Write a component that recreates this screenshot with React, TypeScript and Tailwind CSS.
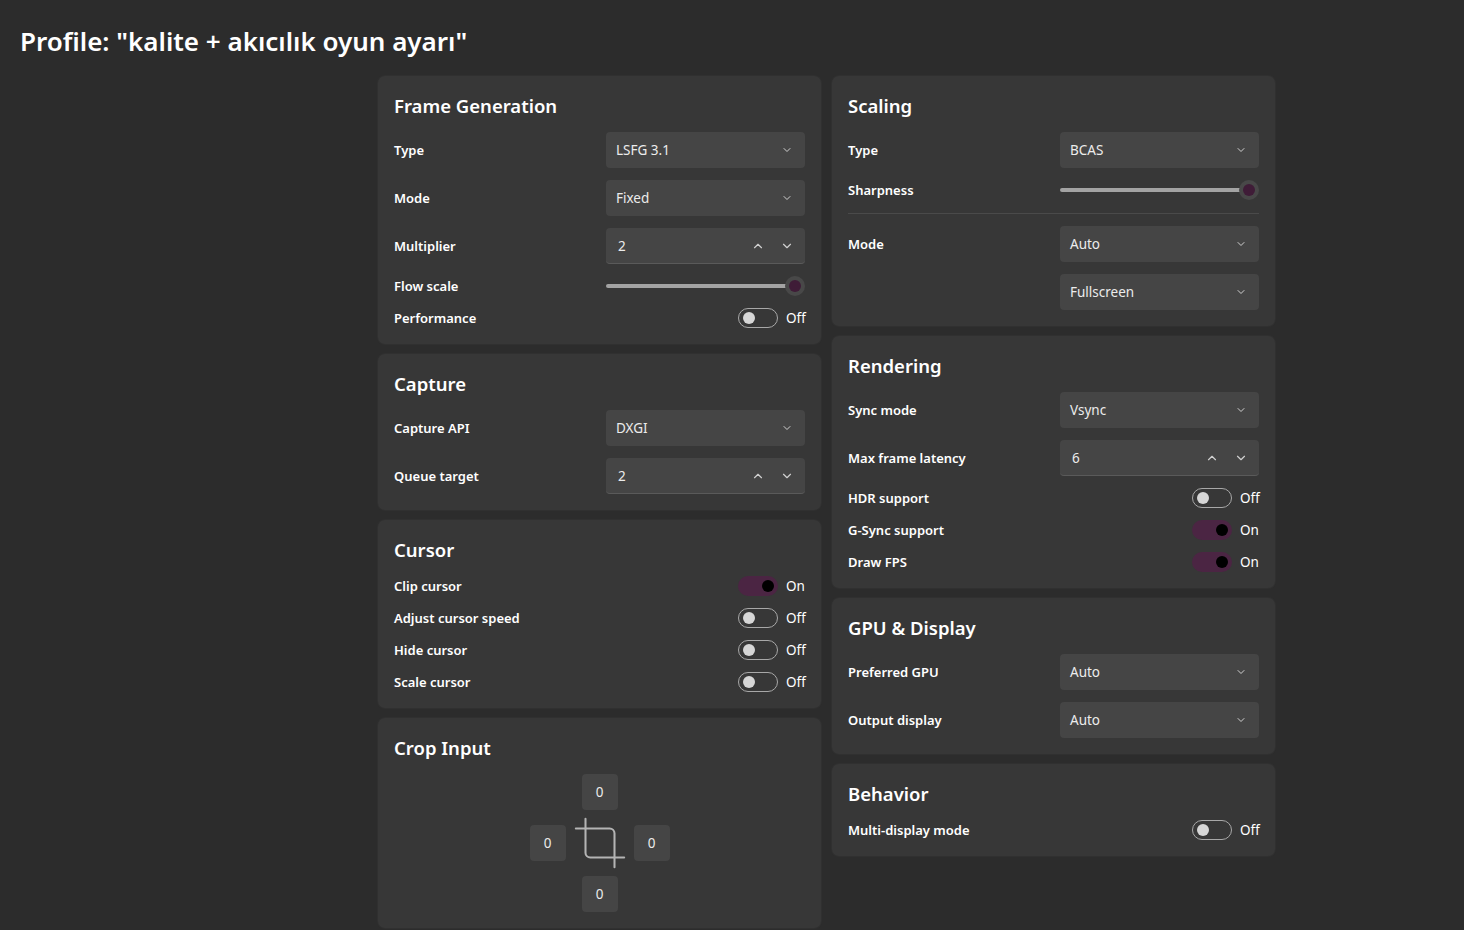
import { ChevronDown, ChevronUp, Crop } from "lucide-react";
import type { ReactNode } from "react";

const font = { fontFamily: '"Noto Sans", "Open Sans", sans-serif' };

// ── Building blocks ─────────────────────────────────────────────────────────
function Card({ title, children }: { title: string; children: ReactNode }) {
  return (
    <section className="flex flex-col gap-3 rounded-[7px] bg-[#373737] p-4 shadow-[0_0_0_1px_#303030]">
      <h2 className="text-[18.5px] leading-[28px] font-semibold text-white">{title}</h2>
      {children}
    </section>
  );
}

function Row({ label, children }: { label?: string; children: ReactNode }) {
  return (
    <div className="flex items-center justify-between leading-5">
      <span className="text-[13px] font-semibold text-white">{label}</span>
      {children}
    </div>
  );
}

function Select({ value }: { value: string }) {
  return (
    <div className="flex h-9 w-[199px] items-center justify-between rounded-[4px] bg-[#454545] pl-[10px] pr-[12px]">
      <span className="text-[13.5px] text-[#ececec]">{value}</span>
      <ChevronDown size={12} strokeWidth={2} className="text-[#d0d0d0]" />
    </div>
  );
}

function NumberBox({ value }: { value: string }) {
  return (
    <div className="flex h-9 w-[199px] items-center justify-between rounded-[4px] border-b border-[#5a5a5a] bg-[#454545] pl-[12px] pr-[11px]">
      <span className="text-[13.5px] text-[#ececec]">{value}</span>
      <div className="flex items-center gap-[15px] text-[#d0d0d0]">
        <ChevronUp size={14} strokeWidth={2} />
        <ChevronDown size={14} strokeWidth={2} />
      </div>
    </div>
  );
}

function Slider() {
  return (
    <div className="flex h-5 w-[199px] items-center">
      <div className="h-1 flex-1 rounded-full bg-[#a3a3a3]" />
      <div className="-ml-1 flex h-5 w-5 items-center justify-center rounded-full bg-[#484848]">
        <div className="h-3 w-3 rounded-full bg-[#3f1c37]" />
      </div>
    </div>
  );
}

function Toggle({ on }: { on: boolean }) {
  return (
    <div className="flex items-center gap-2">
      {on ? (
        <div className="flex h-5 w-10 items-center justify-end rounded-full bg-[#4b2543] pr-[4px]">
          <div className="h-3 w-3 rounded-full bg-black" />
        </div>
      ) : (
        <div className="flex h-5 w-10 items-center rounded-full border border-[#a8a8a8] pl-[4px]">
          <div className="h-3 w-3 rounded-full bg-[#d6d6d6]" />
        </div>
      )}
      <span className="w-[19px] text-[13.5px] text-white">{on ? "On" : "Off"}</span>
    </div>
  );
}

function CropBox() {
  return (
    <div className="flex h-9 w-9 items-center justify-center rounded-[4px] bg-[#454545] text-[13.5px] text-[#ececec]">
      0
    </div>
  );
}

// ── Page ────────────────────────────────────────────────────────────────────
export default function App() {
  return (
    <div className="min-h-screen bg-[#2c2c2c] px-5" style={font}>
      <h1 className="pt-[23px] text-[26px] leading-[36px] font-semibold text-white">
        Profile: "kalite + akıcılık oyun ayarı"
      </h1>

      <div className="mt-[17px] flex gap-[11px] pl-[358px]">
        {/* Left column */}
        <div className="flex w-[443px] flex-col gap-2.5">
          <Card title="Frame Generation">
            <Row label="Type"><Select value="LSFG 3.1" /></Row>
            <Row label="Mode"><Select value="Fixed" /></Row>
            <Row label="Multiplier"><NumberBox value="2" /></Row>
            <Row label="Flow scale"><Slider /></Row>
            <Row label="Performance"><Toggle on={false} /></Row>
          </Card>

          <Card title="Capture">
            <Row label="Capture API"><Select value="DXGI" /></Row>
            <Row label="Queue target"><NumberBox value="2" /></Row>
          </Card>

          <Card title="Cursor">
            <Row label="Clip cursor"><Toggle on /></Row>
            <Row label="Adjust cursor speed"><Toggle on={false} /></Row>
            <Row label="Hide cursor"><Toggle on={false} /></Row>
            <Row label="Scale cursor"><Toggle on={false} /></Row>
          </Card>

          <Card title="Crop Input">
            <div className="grid grid-cols-[36px_36px_36px] grid-rows-[36px_36px_36px] gap-x-4 gap-y-[15px] self-center">
              <div />
              <CropBox />
              <div />
              <CropBox />
              <div className="flex items-center justify-center">
                <Crop size={58} strokeWidth={0.85} className="-m-3 shrink-0 text-[#b4b4b4]" />
              </div>
              <CropBox />
              <div />
              <CropBox />
              <div />
            </div>
          </Card>
        </div>

        {/* Right column */}
        <div className="flex w-[443px] flex-col gap-2.5">
          <Card title="Scaling">
            <Row label="Type"><Select value="BCAS" /></Row>
            <Row label="Sharpness"><Slider /></Row>
            <div className="mt-px h-px bg-[#4a4a4a]" />
            <Row label="Mode"><Select value="Auto" /></Row>
            <Row><Select value="Fullscreen" /></Row>
          </Card>

          <Card title="Rendering">
            <Row label="Sync mode"><Select value="Vsync" /></Row>
            <Row label="Max frame latency"><NumberBox value="6" /></Row>
            <Row label="HDR support"><Toggle on={false} /></Row>
            <Row label="G-Sync support"><Toggle on /></Row>
            <Row label="Draw FPS"><Toggle on /></Row>
          </Card>

          <Card title="GPU & Display">
            <Row label="Preferred GPU"><Select value="Auto" /></Row>
            <Row label="Output display"><Select value="Auto" /></Row>
          </Card>

          <Card title="Behavior">
            <Row label="Multi-display mode"><Toggle on={false} /></Row>
          </Card>
        </div>
      </div>
    </div>
  );
}
